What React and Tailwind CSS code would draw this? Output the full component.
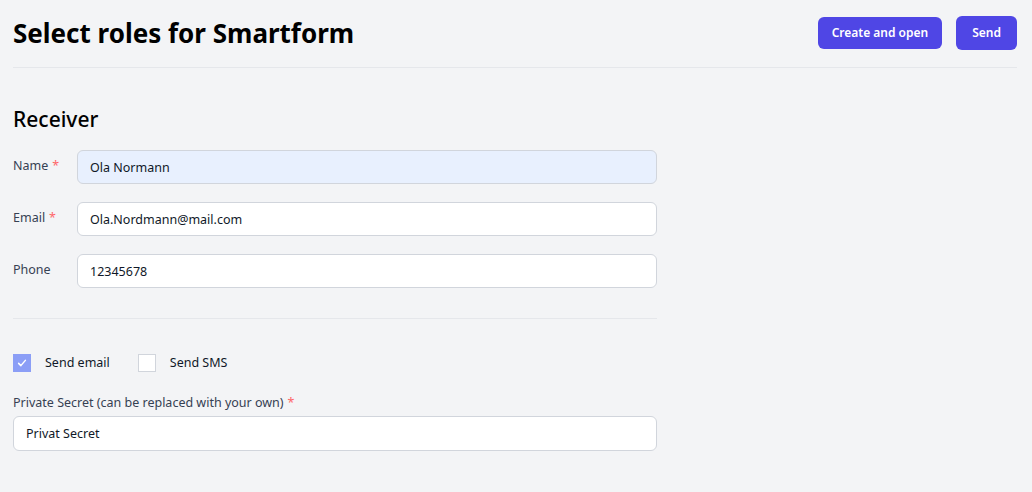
const Field = ({ label, required, value, autofill }) => (
  <div className="flex items-start">
    <label className="w-[64px] shrink-0 pt-[7px] text-[12.5px] text-gray-700">
      {label}
      {required && <span className="ml-1 text-red-400">*</span>}
    </label>
    <input
      readOnly
      value={value}
      className={`h-[34px] flex-1 rounded-md border border-gray-300 px-3 text-[12.5px] text-gray-900 outline-none ${
        autofill ? 'bg-[#e8f0fe]' : 'bg-white'
      }`}
    />
  </div>
)

const Checkbox = ({ checked, label }) => (
  <label className="flex items-center gap-[14px]">
    <span
      className={`flex h-[18px] w-[18px] items-center justify-center ${
        checked ? 'bg-[#8b9ef6]' : 'border border-gray-300 bg-white'
      }`}
    >
      {checked && (
        <svg viewBox="0 0 16 16" className="h-[12px] w-[12px]" fill="none" stroke="white" strokeWidth="2" strokeLinecap="round" strokeLinejoin="round">
          <path d="M3.5 8.5l3 3 6-7" />
        </svg>
      )}
    </span>
    <span className="text-[12.5px] text-gray-900">{label}</span>
  </label>
)

const App = () => {
  return (
    <div className="min-h-screen bg-gray-100 pl-[13px] pr-[15px] font-['Noto_Sans',sans-serif]">
      <div className="flex items-center justify-between border-b border-gray-200 pb-[15px] pt-[14px]">
        <h1 className="text-[26px] font-bold leading-[38px] text-black">Select roles for Smartform</h1>
        <div className="flex items-center gap-[14px]">
          <button className="h-[32px] rounded-md bg-[#4f46e5] px-[14px] text-[12px] font-semibold text-white">
            Create and open
          </button>
          <button className="h-[34px] rounded-md bg-[#4f46e5] px-[16px] text-[12px] font-semibold text-white">
            Send
          </button>
        </div>
      </div>

      <div className="w-[644px] pt-[36px]">
        <h2 className="mb-[16px] text-[21px] font-medium leading-[30px] text-black">Receiver</h2>
        <div className="flex flex-col gap-[18px]">
          <Field label="Name" required value="Ola Normann" autofill />
          <Field label="Email" required value="Ola.Nordmann@mail.com" />
          <Field label="Phone" value="12345678" />
        </div>

        <div className="mt-[30px] border-t border-gray-200 pt-[35px]">
          <div className="flex items-center gap-[28px]">
            <Checkbox checked label="Send email" />
            <Checkbox label="Send SMS" />
          </div>
          <div className="mt-[20px]">
            <label className="block text-[12.5px] leading-[20px] text-gray-700">
              Private Secret (can be replaced with your own)
              <span className="ml-1 text-red-400">*</span>
            </label>
            <input
              readOnly
              value="Privat Secret"
              className="mt-[3px] h-[35px] w-full rounded-md border border-gray-300 bg-white px-3 text-[12.5px] text-gray-900 outline-none"
            />
          </div>
        </div>
      </div>
    </div>
  )
}

export default App
